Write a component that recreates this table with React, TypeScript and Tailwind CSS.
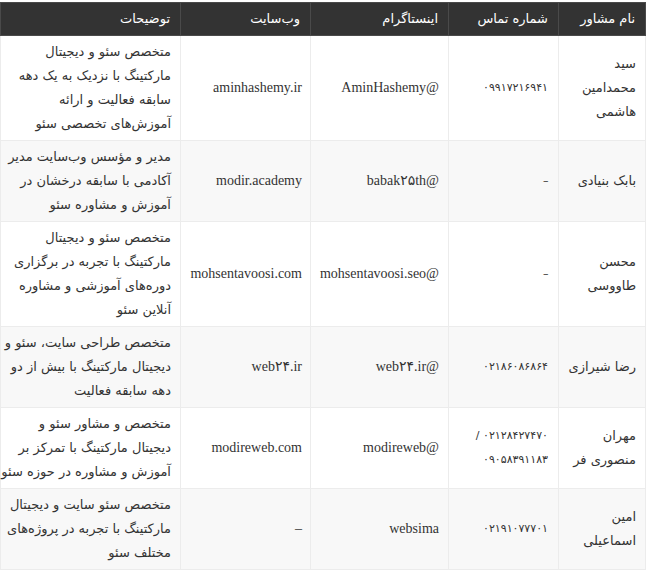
import React from "react";

type Row = {
	name: string[];
	phone: string[];
	insta: string;
	site: string;
	desc: string[];
};

const rows: Row[] = [
	{
		name: ["سید", "محمدامین", "هاشمی"],
		phone: ["۰۹۹۱۷۲۱۶۹۴۱"],
		insta: "@AminHashemy",
		site: "aminhashemy.ir",
		desc: ["متخصص سئو و دیجیتال", "مارکتینگ با نزدیک به یک دهه", "سابقه فعالیت و ارائه", "آموزش‌های تخصصی سئو"],
	},
	{
		name: ["بابک بنیادی"],
		phone: ["–"],
		insta: "@babak۲۵th",
		site: "modir.academy",
		desc: ["مدیر و مؤسس وب‌سایت مدیر", "آکادمی با سابقه درخشان در", "آموزش و مشاوره سئو"],
	},
	{
		name: ["محسن", "طاووسی"],
		phone: ["–"],
		insta: "@mohsentavoosi.seo",
		site: "mohsentavoosi.com",
		desc: ["متخصص سئو و دیجیتال", "مارکتینگ با تجربه در برگزاری", "دوره‌های آموزشی و مشاوره", "آنلاین سئو"],
	},
	{
		name: ["رضا شیرازی"],
		phone: ["۰۲۱۸۶۰۸۶۸۶۴"],
		insta: "@web۲۴.ir",
		site: "web۲۴.ir",
		desc: ["متخصص طراحی سایت، سئو و", "دیجیتال مارکتینگ با بیش از دو", "دهه سابقه فعالیت"],
	},
	{
		name: ["مهران", "منصوری فر"],
		phone: ["۰۲۱۲۸۴۲۷۴۷۰ /", "۰۹۰۵۸۳۹۱۱۸۳"],
		insta: "@modireweb",
		site: "modireweb.com",
		desc: ["متخصص و مشاور سئو و", "دیجیتال مارکتینگ با تمرکز بر", "آموزش و مشاوره در حوزه سئو"],
	},
	{
		name: ["امین", "اسماعیلی"],
		phone: ["۰۲۱۹۱۰۷۷۷۰۱"],
		insta: "websima",
		site: "–",
		desc: ["متخصص سئو سایت و دیجیتال", "مارکتینگ با تجربه در پروژه‌های", "مختلف سئو"],
	},
];

const headers = ["نام مشاور", "شماره تماس", "اینستاگرام", "وب‌سایت", "توضیحات"];

const Lines: React.FC<{ lines: string[] }> = ({ lines }) => (
	<>
		{lines.map((l, i) => (
			<div key={i} className="whitespace-nowrap">
				{l}
			</div>
		))}
	</>
);

export default function App() {
	return (
		<div dir="rtl" className="bg-white pt-[2px] pl-[1px] pr-[1px] min-h-screen">
			<table className="w-[645px] table-fixed border-collapse font-['DejaVu_Sans',sans-serif] text-[13px] text-[#333]">
				<colgroup>
					<col className="w-[87px]" />
					<col className="w-[110px]" />
					<col className="w-[138px]" />
					<col className="w-[130px]" />
					<col className="w-[180px]" />
				</colgroup>
				<thead>
					<tr className="bg-[#333333] h-[33px]">
						{headers.map((h) => (
							<th key={h} className="border border-[#4a4a4a] px-[10px] text-right align-middle font-normal text-white text-[13px]">
								{h}
							</th>
						))}
					</tr>
				</thead>
				<tbody>
					{rows.map((r, i) => (
						<tr key={i} className={i % 2 === 1 ? "bg-[#f8f8f8]" : "bg-white"}>
							<td className="border border-[#ececec] px-[9px] py-1 align-middle leading-[24px]">
								<Lines lines={r.name} />
							</td>
							<td className="border border-[#ececec] px-[10px] py-1 align-middle leading-[24px] text-[11px] tracking-[-0.5px]">
								<Lines lines={r.phone} />
							</td>
							<td className="border border-[#ececec] px-[9px] py-1 align-middle leading-[24px] font-['Liberation_Serif','DejaVu_Sans',serif] text-[14px]">
								{r.insta}
							</td>
							<td className="border border-[#ececec] px-[8px] py-1 align-middle leading-[24px] font-['Liberation_Serif','DejaVu_Sans',serif] text-[14px]">
								{r.site}
							</td>
							<td className="border border-[#ececec] px-[9px] py-1 align-middle leading-[24px]">
								<Lines lines={r.desc} />
							</td>
						</tr>
					))}
				</tbody>
			</table>
		</div>
	);
}
